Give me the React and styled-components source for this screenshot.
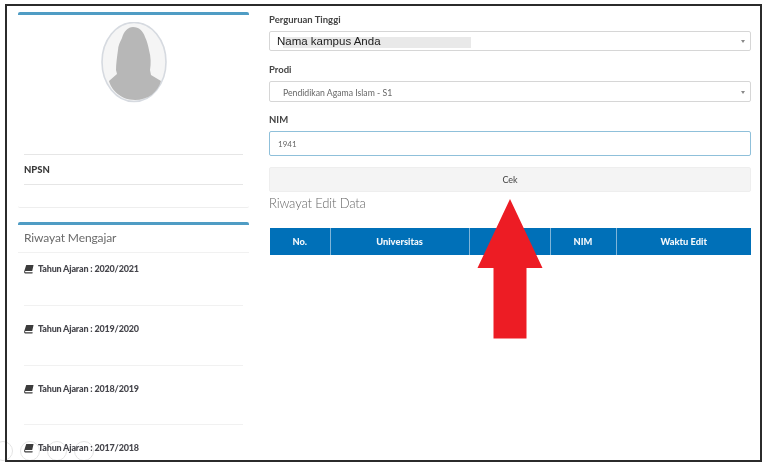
import React from "react";
import styled, { createGlobalStyle } from "styled-components";

const Global = createGlobalStyle`
  html, body { margin: 0; padding: 0; background: #fff; }
  body { width: 768px; height: 468px; overflow: hidden; font-family: "Lato", "Liberation Sans", sans-serif; }
`;

const Page = styled.div`
  position: relative;
  width: 768px;
  height: 468px;
  padding: 4px 0 0 5px;
  box-sizing: border-box;
  filter: blur(0.35px);
`;

const Frame = styled.div`
  position: relative;
  box-sizing: border-box;
  width: 757px;
  height: 458px;
  border: 2px solid #2b2b2b;
  overflow: hidden;
  display: flex;
  padding: 6px 9px 0 11px;
  gap: 20px;
`;

const Side = styled.aside`
  width: 231px;
  flex: none;
  display: flex;
  flex-direction: column;
`;

const Box = styled.div`
  flex: none;
  border-top: 3px solid #4f9cc4;
  border-radius: 2px;
`;

const ProfileBox = styled(Box)`
  height: 192px;
  display: flex;
  flex-direction: column;
  border-bottom: 1px solid #eee;
`;

const AvatarWrap = styled.div`
  display: flex;
  justify-content: center;
  margin-top: 7px;
  height: 82px;
`;

const Info = styled.div`
  margin: 50px 6px 0 6px;
  border-top: 1px solid #e6e6e6;
  border-bottom: 1px solid #e6e6e6;
  height: 29px;
  display: flex;
  align-items: center;
  font-size: 9.5px;
  font-weight: 900;
  color: #3a3a3a;
`;

const HistoryBox = styled(Box)`
  margin-top: 14px;
`;

const SideTitle = styled.h3`
  margin: 0;
  height: 28px;
  box-sizing: border-box;
  padding: 0 0 2px 6px;
  display: flex;
  align-items: center;
  font-size: 12px;
  font-weight: 400;
  letter-spacing: -0.12px;
  color: #6b6b6b;
  border-bottom: 1px solid #f1f1f1;
`;

const YearRow = styled.div`
  margin: 0 6px;
  height: ${(p) => (p.$first ? 53 : 59.5)}px;
  padding-top: ${(p) => (p.$first ? 9 : 16)}px;
  box-sizing: border-box;
  display: flex;
  align-items: flex-start;
  gap: 4px;
  font-size: 9px;
  line-height: 14px;
  font-weight: 900;
  letter-spacing: -0.18px;
  color: #46464c;
  border-bottom: 1px solid #f1f1f1;
  &:last-child { border-bottom: 0; }
`;

const Main = styled.main`
  flex: 1;
  min-width: 0;
  padding-top: 2px;
`;

const Label = styled.label`
  display: block;
  font-size: 9.5px;
  font-weight: 700;
  color: #444;
  height: 12px;
  line-height: 12px;
  margin-bottom: 5px;
`;

const Field = styled.div`
  box-sizing: border-box;
  height: ${(p) => p.$h}px;
  margin-bottom: ${(p) => p.$mb}px;
  border: 1px solid ${(p) => (p.$focus ? "#8fc0da" : "#d6d6d6")};
  border-radius: 2px;
  display: flex;
  align-items: center;
  justify-content: space-between;
  padding: ${(p) => p.$pt || 0}px 5px 0 ${(p) => p.$pl}px;
  font-size: ${(p) => p.$size || 8.7}px;
  color: #666;
  background: #fff;
`;

const Caret = styled.span`
  width: 0;
  height: 0;
  border-left: 2.5px solid transparent;
  border-right: 2.5px solid transparent;
  border-top: 3px solid #888;
`;

const Campus = styled.span`
  position: relative;
  font-family: "Liberation Sans", Arial, sans-serif;
  font-size: 11.5px;
  color: #1c1c1c;
  line-height: 12px;
  &::before {
    content: "";
    position: absolute;
    z-index: 0;
    left: 6px;
    top: 2px;
    width: 188px;
    height: 11px;
    background: #e9e9e9;
  }
  span { position: relative; }
`;

const CheckButton = styled.button`
  display: block;
  width: 100%;
  height: 25px;
  border: 1px solid #eee;
  border-radius: 2px;
  background: #f4f4f4;
  font: 400 9px "Lato", sans-serif;
  color: #444;
`;

const Heading = styled.h2`
  margin: 2px 0 16px;
  height: 18px;
  line-height: 18px;
  font-size: 13px;
  font-weight: 300;
  letter-spacing: -0.15px;
  color: #666;
`;

const Table = styled.table`
  width: 481px;
  margin-left: 1px;
  border-collapse: collapse;
  table-layout: fixed;
  background: #0070b8;
`;

const Th = styled.th`
  box-sizing: border-box;
  width: ${(p) => p.$w}px;
  height: 27px;
  padding: 0;
  font-size: 9.3px;
  font-weight: 900;
  color: #f2f7fb;
  border-left: 1px solid #7fb5d9;
  &:first-child { border-left: 0; }
`;

const Arrow = styled.svg`
  position: absolute;
  left: 470px;
  top: 193px;
`;

const Badges = styled.div`
  position: absolute;
  left: -7px;
  top: 441px;
  display: flex;
  gap: 7px;
`;

const Badge = styled.span`
  width: 18px;
  height: 18px;
  border-radius: 50%;
  border: 1px solid #e4e4e4;
`;

function Avatar() {
  return (
    <svg width="66" height="82" viewBox="0 0 66 82">
      <ellipse cx="33" cy="40" rx="32" ry="39.5" fill="#f5f5f5" stroke="#d6dae0" strokeWidth="1.6" />
      <path
        d="M32 5c-5 0-9 4-11 11-2 4-4 8-4 12-1 7-2 14-2 20l1 4-8 7c2 8 11 19 26 19 13 0 23-8 26-19l-10-6-1-5c1-6 1-13-1-20-1-5-2-9-4-13-2-6-6-10-12-10z"
        fill="#b7b7b7"
      />
    </svg>
  );
}

function BookIcon() {
  return (
    <svg width="10" height="10" viewBox="0 0 9 9" style={{ marginTop: 2, flex: "none" }}>
      <path d="M2 .8h6.600L7.400 6.400H1.600c-.8 0-1 1.100-.2 1.100h6.400l-.2 1H1.200C.2 8.500 0 7.400 .2 6.500z" fill="#3c3c3c" />
    </svg>
  );
}

const years = ["2020/2021", "2019/2020", "2018/2019", "2017/2018"];
const columns = [
  ["No.", 60],
  ["Universitas", 139],
  ["Prodi", 81],
  ["NIM", 66],
  ["Waktu Edit", 135],
];

export default function App() {
  return (
    <Page>
      <Global />
      <Badges>
        {[0, 1, 2, 3].map((i) => (
          <Badge key={i} />
        ))}
      </Badges>
      <Frame>
        <Side>
          <ProfileBox>
            <AvatarWrap>
              <Avatar />
            </AvatarWrap>
            <Info>NPSN</Info>
          </ProfileBox>
          <HistoryBox>
            <SideTitle>Riwayat Mengajar</SideTitle>
            {years.map((y, i) => (
              <YearRow key={y} $first={i === 0}>
                <BookIcon />
                Tahun Ajaran : {y}
              </YearRow>
            ))}
          </HistoryBox>
        </Side>
        <Main>
          <Label>Perguruan Tinggi</Label>
          <Field $h={20} $mb={13} $pl={7}>
            <Campus>
              <span>Nama kampus Anda</span>
            </Campus>
            <Caret />
          </Field>
          <Label>Prodi</Label>
          <Field $h={21} $mb={12} $pl={13} $pt={2}>
            Pendidikan Agama Islam - S1
            <Caret />
          </Field>
          <Label>NIM</Label>
          <Field $h={25} $mb={11} $pl={8} $size={8} $focus>
            1941
          </Field>
          <CheckButton>Cek</CheckButton>
          <Heading>Riwayat Edit Data</Heading>
          <Table>
            <thead>
              <tr>
                {columns.map(([name, w]) => (
                  <Th key={name} $w={w}>
                    {name}
                  </Th>
                ))}
              </tr>
            </thead>
          </Table>
        </Main>
        <Arrow width="66" height="140" viewBox="0 0 66 140">
          <path d="M33 0L65.500 69H49.500V139.500H16.500V69H0.500z" fill="#ed1c24" />
        </Arrow>
      </Frame>
    </Page>
  );
}
